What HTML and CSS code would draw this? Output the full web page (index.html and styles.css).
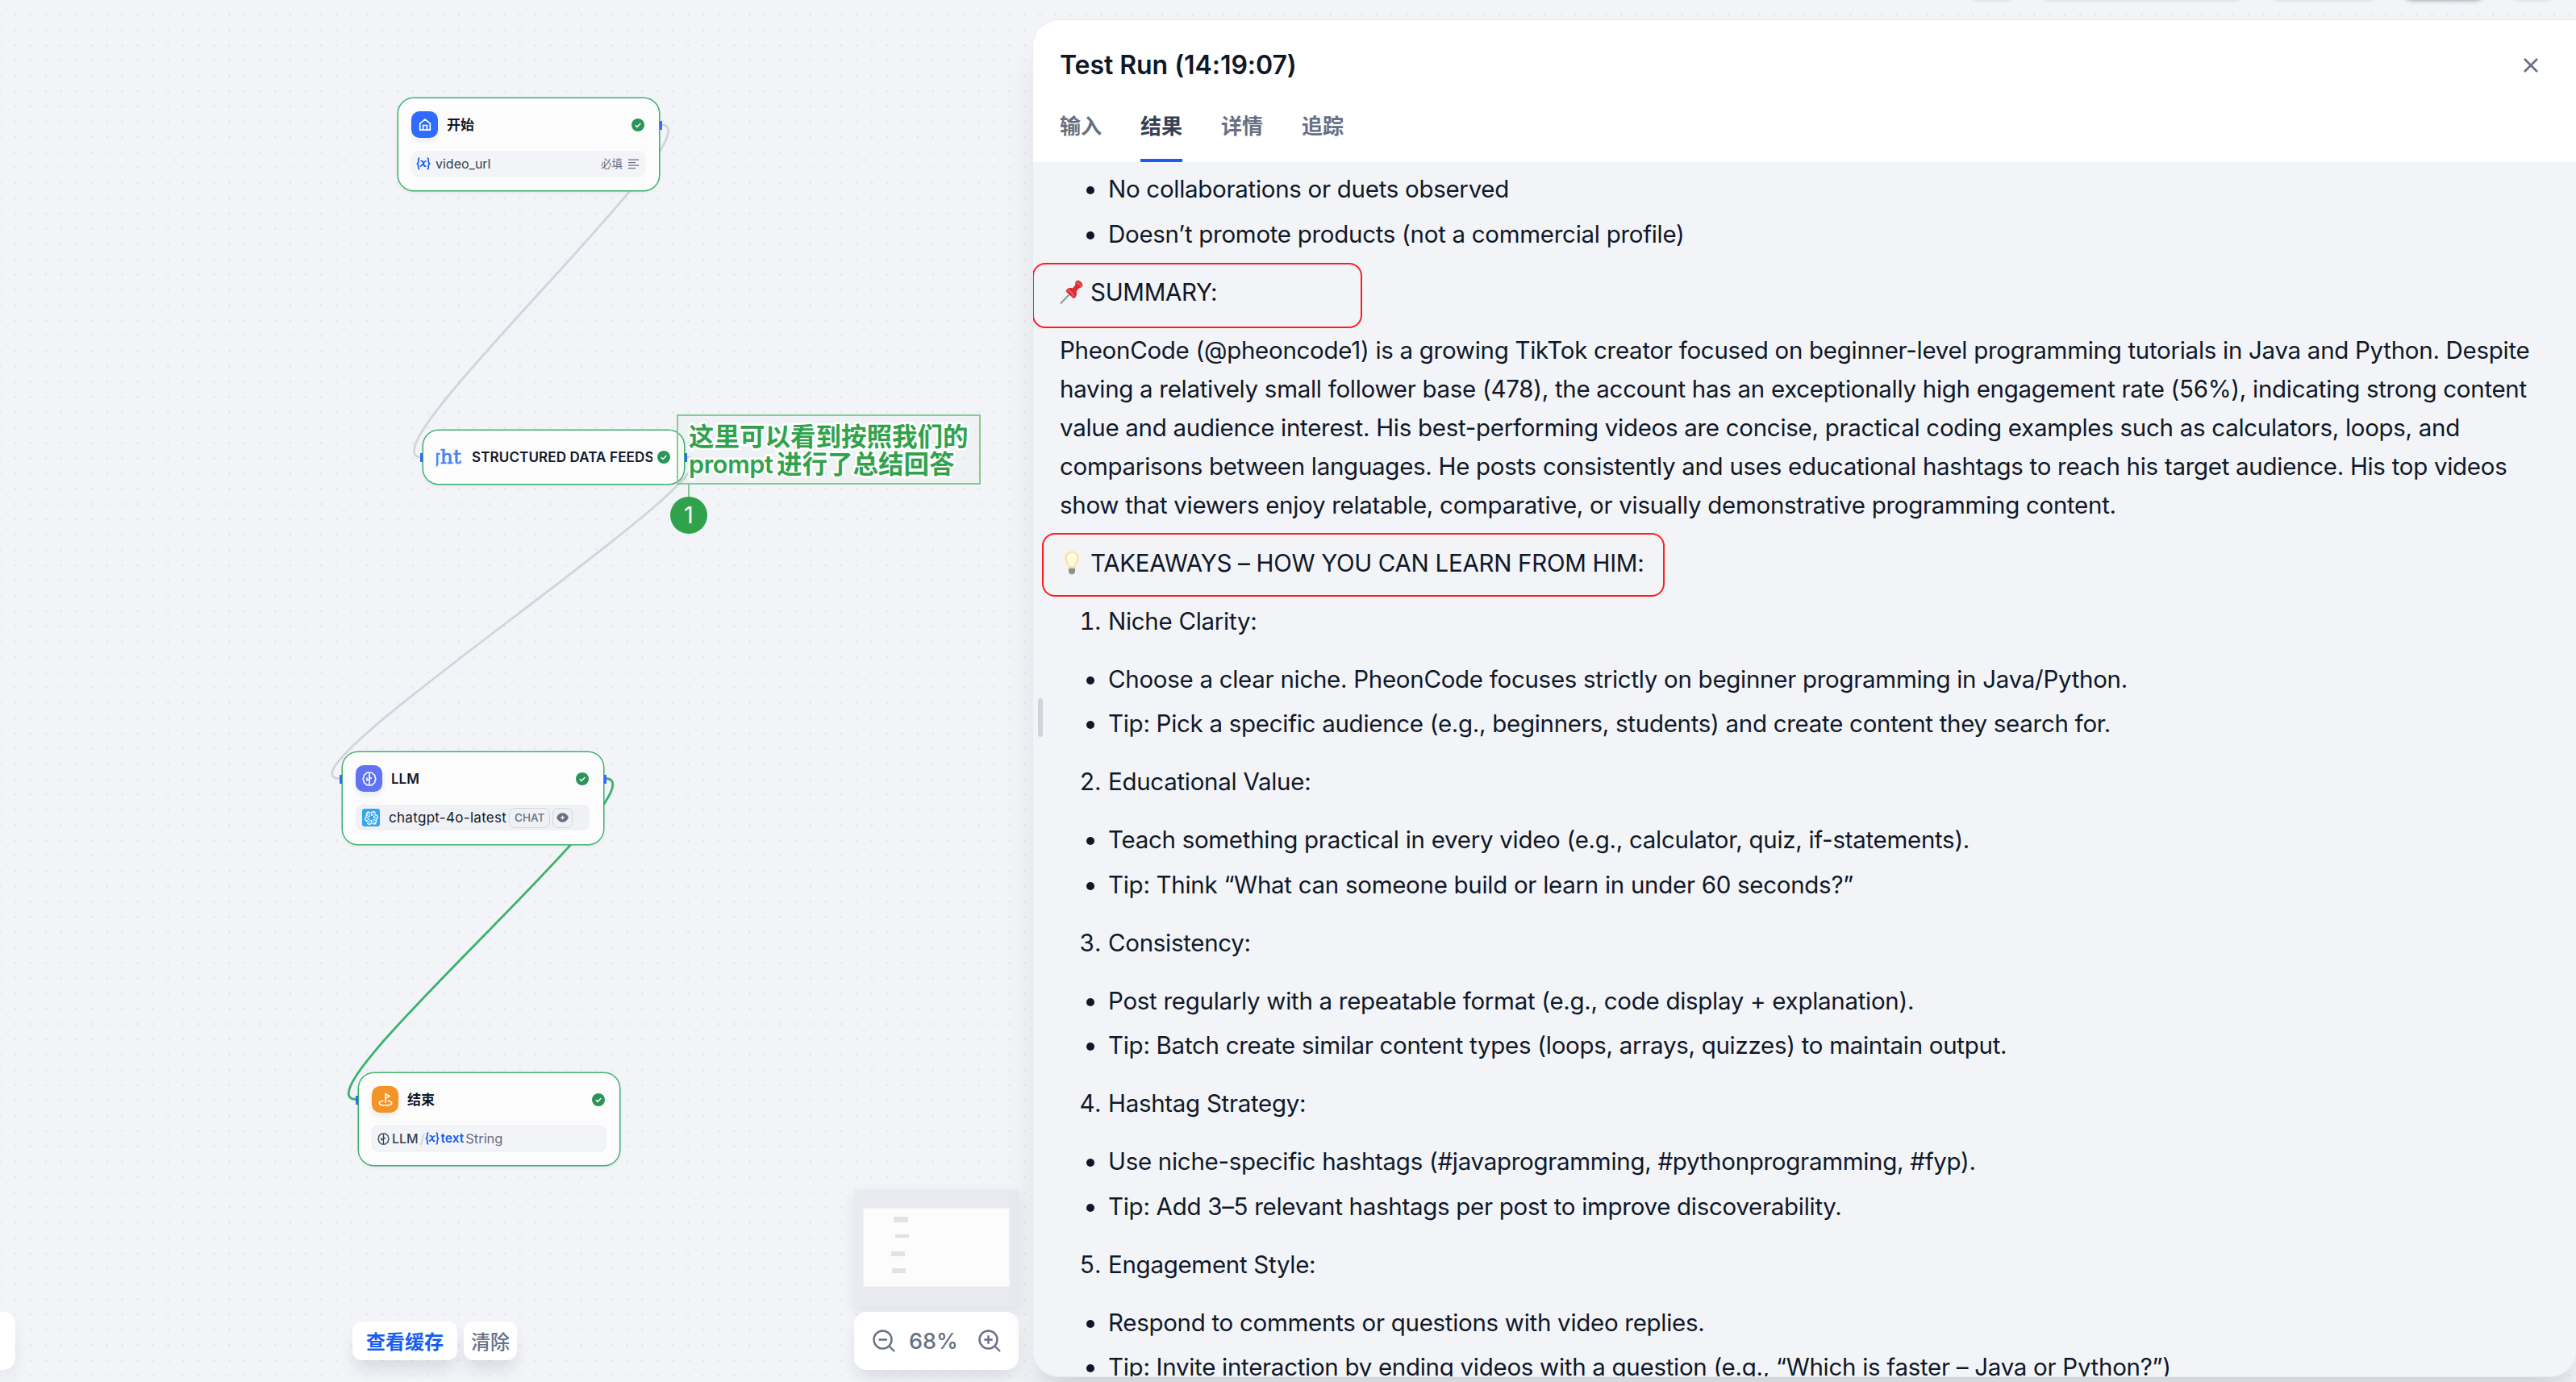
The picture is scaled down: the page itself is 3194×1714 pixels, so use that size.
FILE: index.html
```html
<!DOCTYPE html>
<html lang="zh-CN">
<head>
    <meta charset="UTF-8">
    <meta name="viewport" content="width=device-width, initial-scale=1.0">
    <title>Test Run</title>
    <link rel="stylesheet" href="styles.css">
</head>
<body>
    <!-- shared icons -->
    <svg class="sprite" width="0" height="0">
        <symbol id="check" viewBox="0 0 16 16">
            <circle cx="8" cy="8" r="8" fill="#2d9458"/>
            <path d="M4.8 8.2l2.2 2.2 4.3-4.4" fill="none" stroke="#fff" stroke-width="1.5"/>
        </symbol>
        <symbol id="var" viewBox="0 0 18 16">
            <path d="M4.300 1.200C2.300 1.200 2.800 3 2.800 5S2.400 7.600.8 8c1.600.4 2 1 2 3s-.5 3.800 1.500 3.800M13.700 1.200C15.700 1.200 15.200 3 15.200 5s.4 2.600 2 3c-1.600.4-2 1-2 3s.5 3.800-1.500 3.800M5.600 5c1.600-.7 2.600-.2 3 1.200l1 3.600c.4 1.400 1.300 1.800 2.800 1M12.700 4.800c-1.500-.3-2.300.5-3.500 2.200L7.800 9.300c-1 1.400-1.700 2-3 1.700" fill="none" stroke="#155eef" stroke-width="1.700"/>
        </symbol>
        <symbol id="brain" viewBox="0 0 16 16">
            <path d="M8 1.200C6.400.5 4.600 1 4 2.600 2.300 3 1.500 4.400 1.900 6 .8 7.300.8 8.800 1.900 10c-.4 1.600.5 3 2.100 3.400.7 1.600 2.400 2 4 1.300 1.600.7 3.300.3 4-1.300 1.600-.4 2.500-1.800 2.100-3.400 1.100-1.200 1.100-2.700 0-4 .4-1.600-.4-3-2.100-3.400C11.400 1 9.600.5 8 1.200zM8 1.200v13.500M8 5c0 1.500 1 2.200 2.600 2.200M8 10.600C8 9 7 8.400 5.300 8.400M5.300 6.400v3.800" fill="none" stroke="currentColor" stroke-width="1.400"/>
        </symbol>
    </svg>

    <div class="app">
        <svg class="dots">
            <defs>
                <pattern id="grid" x="-1.430" y="17" width="18.966" height="18.966" patternUnits="userSpaceOnUse">
                    <circle cx="1.300" cy="1.300" r="1.300" fill="#e1e4ea"/>
                </pattern>
            </defs>
            <rect width="100%" height="100%" fill="url(#grid)"/>
        </svg>

        <div class="toolbar">
            <span class="tool tool-sm"></span>
            <span class="tool tool-lg"></span>
            <span class="tool tool-md"></span>
            <span class="tool tool-dark"></span>
            <span class="tool tool-sm"></span>
        </div>

        <main class="workspace">
            <svg class="edges" width="1281" height="1714" fill="none">
                <path class="edge" d="M819 154.500C900 154.500 442 567 523 567"/>
                <path class="edge" d="M850 567C947 567 325 965.500 422 965.500"/>
                <path class="edge edge-done" d="M750 965.500C833 965.500 359 1363.500 442 1363.500"/>
            </svg>

            <div class="node node-start has-out">
                <div class="node-head">
                    <span class="node-icon blue">
                        <svg width="18" height="18" viewBox="0 0 18 18" fill="none" stroke="#fff" stroke-width="1.700"><path d="M2.700 7.200L9 2.200l6.300 5v8H2.700zM6.600 15V9.500h4.800V15"/></svg>
                    </span>
                    <span class="node-title">开始</span>
                    <svg class="check"><use href="#check"/></svg>
                </div>
                <div class="field">
                    <svg class="var"><use href="#var"/></svg>
                    <span class="field-name">video_url</span>
                    <span class="field-note">必填</span>
                    <svg class="lines" width="14" height="13" fill="none" stroke="#676f83" stroke-width="1.300"><path d="M0 1.200h13M0 4.700h9M0 8.200h13M0 11.700h9"/></svg>
                </div>
            </div>

            <div class="node node-feed has-in has-out">
                <div class="node-head">
                    <span class="logo-clip"><span>ght</span></span>
                    <span class="node-title">STRUCTURED DATA FEEDS</span>
                    <svg class="check"><use href="#check"/></svg>
                </div>
            </div>

            <div class="node node-llm has-in has-out">
                <div class="node-head">
                    <span class="node-icon indigo"><svg width="18" height="18"><use href="#brain"/></svg></span>
                    <span class="node-title">LLM</span>
                    <svg class="check"><use href="#check"/></svg>
                </div>
                <div class="field model">
                    <span class="model-icon">
                        <svg width="17" height="17" viewBox="0 0 24 24" fill="none" stroke="#fff" stroke-width="1.400">
                            <g id="petal"><path d="M12 8.200V4.600a4.200 4.200 0 0 1 7.600-2.200M8.700 10.100V5.500a4.500 4.500 0 0 1 6.800-3.600l3.800 2.200"/></g>
                            <use href="#petal" transform="rotate(60 12 12)"/>
                            <use href="#petal" transform="rotate(120 12 12)"/>
                            <use href="#petal" transform="rotate(180 12 12)"/>
                            <use href="#petal" transform="rotate(240 12 12)"/>
                            <use href="#petal" transform="rotate(300 12 12)"/>
                        </svg>
                    </span>
                    <span class="model-name">chatgpt-4o-latest</span>
                    <span class="badge">CHAT</span>
                    <span class="badge badge-eye">
                        <svg width="15" height="12" viewBox="0 0 15 12"><path d="M0 6C2 2 4.500.3 7.500.3S13 2 15 6c-2 4-4.500 5.700-7.500 5.700S2 10 0 6z" fill="#676f83"/><path d="M7.500 3l.9 2.100 2.100.9-2.100.9-.9 2.100-.9-2.100L4.500 6l2.100-.9z" fill="#fff"/></svg>
                    </span>
                </div>
            </div>

            <div class="node node-end has-in">
                <div class="node-head">
                    <span class="node-icon orange">
                        <svg width="18" height="18" viewBox="0 0 18 18" fill="none" stroke="#fff" stroke-width="1.600"><path d="M9 13V1.800l5 2.800-5 2.800M6.500 10.200C3.500 10.600 1.300 11.600 1.300 13c0 1.800 3.300 3 7.700 3s7.700-1.200 7.700-3c0-1.400-2.200-2.400-5.200-2.800"/></svg>
                    </span>
                    <span class="node-title">结束</span>
                    <svg class="check"><use href="#check"/></svg>
                </div>
                <div class="field output">
                    <svg class="brain" width="15" height="15"><use href="#brain"/></svg>
                    <span class="out-node">LLM</span>
                    <span class="slash">/</span>
                    <svg class="var"><use href="#var"/></svg>
                    <span class="out-var">text</span>
                    <span class="out-type">String</span>
                </div>
            </div>

            <div class="note">
                <div class="note-box">这里可以看到按照我们的<br><span class="note-latin">prompt</span>进行了总结回答</div>
                <div class="note-stem"></div>
                <div class="note-pin">1</div>
            </div>

            <div class="bottom-bar">
                <div class="dock"></div>
                <div class="cache">
                    <button class="btn btn-primary">查看缓存</button>
                    <button class="btn btn-clear">清除</button>
                </div>
                <div class="map-stack">
                    <div class="minimap">
                        <svg width="180" height="96" fill="#e2e2e2">
                            <path d="M37 10h18v7H37zM39 32h17v4H39zM34 53h17v6H34zM35 74h17v6H35z"/>
                        </svg>
                    </div>
                    <div class="zoom">
                        <svg width="28" height="28" viewBox="0 0 28 28" fill="none" stroke="#676f83" stroke-width="2.400"><circle cx="12.500" cy="12.500" r="11"/><path d="M20.500 20.500l6.500 6.500M7.500 12.500h10.500"/></svg>
                        <span class="zoom-value">68%</span>
                        <svg width="28" height="28" viewBox="0 0 28 28" fill="none" stroke="#676f83" stroke-width="2.400"><circle cx="12.500" cy="12.500" r="11"/><path d="M20.500 20.500l6.500 6.500M7.300 12.500h10.400M12.500 7.300v10.400"/></svg>
                    </div>
                </div>
            </div>
        </main>

        <section class="panel">
            <header class="panel-head">
                <div class="panel-title">
                    <h1>Test Run (14:19:07)</h1>
                    <svg class="close" width="18" height="18" stroke="#676f83" stroke-width="2.600"><path d="M1 1l16 16M17 1L1 17"/></svg>
                </div>
                <nav class="tabs">
                    <a class="tab">输入</a>
                    <a class="tab active">结果</a>
                    <a class="tab">详情</a>
                    <a class="tab">追踪</a>
                </nav>
            </header>
            <div class="handle"></div>
            <div class="result">
                <ul>
                    <li>No collaborations or duets observed</li>
                    <li>Doesn’t promote products (not a commercial profile)</li>
                </ul>
                <p class="boxed box-summary">
                    <svg class="emoji" width="30" height="30" viewBox="0 0 30 30"><path d="M13 17L1 29.500" stroke="#8d979f" stroke-width="2"/><path d="M19.500 2.500c2-2.500 4-2.200 6.500 0s3.200 4.800.8 6.700c-1 .7-2 .6-2.800 1.300l-3.300 3.700c.8 3.300.2 6.200-2 8.300-1 .9-2 .5-3-.5l-7-6.600c-1-1-1.300-2-.4-3 2-2.200 4.600-2.800 7.700-1.900l3.200-4c.5-1-.2-2.900.3-4z" fill="#d92f35"/><path d="M20.500 3c2 .3 5.200 3.300 5.600 5.500M9.500 13c3 .2 6.800 3.800 8 7.500" fill="none" stroke="#f2696c" stroke-width="1.500"/></svg>
                    <span>SUMMARY:</span>
                </p>
                <p class="summary">PheonCode (@pheoncode1) is a growing TikTok creator focused on beginner-level programming tutorials in Java and Python. Despite<br>having a relatively small follower base (478), the account has an exceptionally high engagement rate (56%), indicating strong content<br>value and audience interest. His best-performing videos are concise, practical coding examples such as calculators, loops, and<br>comparisons between languages. He posts consistently and uses educational hashtags to reach his target audience. His top videos<br>show that viewers enjoy relatable, comparative, or visually demonstrative programming content.</p>
                <p class="boxed box-takeaways">
                    <svg class="emoji" width="30" height="30" viewBox="0 0 30 30"><path d="M15 .5c5.500 0 9 3.700 9 8.700 0 4.500-3.300 6.500-4.500 12h-9C9.300 15.700 6 13.700 6 9.200 6 4.200 9.500.5 15 .5z" fill="#fae7a6"/><path d="M15 3c3.700 0 6 2.700 6 6 0 4-2.500 5.500-3.500 10h-5C11.500 14.500 9 13 9 9c0-3.300 2.300-6 6-6z" fill="#fffbe6"/><path d="M11 21.500h8v5c0 1.500-1.500 3-4 3s-4-1.500-4-3z" fill="#a3a09c"/><path d="M11 24h8M11.500 26.500h7" stroke="#77736f"/></svg>
                    <span>TAKEAWAYS – HOW YOU CAN LEARN FROM HIM:</span>
                </p>
                <ol><li>Niche Clarity:</li></ol>
                <ul>
                    <li>Choose a clear niche. PheonCode focuses strictly on beginner programming in Java/Python.</li>
                    <li>Tip: Pick a specific audience (e.g., beginners, students) and create content they search for.</li>
                </ul>
                <ol><li>Educational Value:</li></ol>
                <ul>
                    <li>Teach something practical in every video (e.g., calculator, quiz, if-statements).</li>
                    <li>Tip: Think “What can someone build or learn in under 60 seconds?”</li>
                </ul>
                <ol><li>Consistency:</li></ol>
                <ul>
                    <li>Post regularly with a repeatable format (e.g., code display + explanation).</li>
                    <li>Tip: Batch create similar content types (loops, arrays, quizzes) to maintain output.</li>
                </ul>
                <ol><li>Hashtag Strategy:</li></ol>
                <ul>
                    <li>Use niche-specific hashtags (#javaprogramming, #pythonprogramming, #fyp).</li>
                    <li>Tip: Add 3–5 relevant hashtags per post to improve discoverability.</li>
                </ul>
                <ol><li>Engagement Style:</li></ol>
                <ul>
                    <li>Respond to comments or questions with video replies.</li>
                    <li>Tip: Invite interaction by ending videos with a question (e.g., “Which is faster – Java or Python?”)</li>
                </ul>
            </div>
        </section>
    </div>
</body>
</html>
```
FILE: styles.css
```css
*,
*::before,
*::after {
    margin: 0;
    padding: 0;
    box-sizing: border-box;
}
body {
    font-family: Inter, "Noto Sans CJK SC", sans-serif;
    background-color: #f2f4f7;
    color: #101828;
    overflow: hidden;
}
svg {
    display: block;
    flex-shrink: 0;
}
.sprite {
    position: absolute;
}
.app {
    position: relative;
    display: flex;
    width: 3194px;
    height: 1714px;
    background: #f2f4f8;
    overflow: hidden;
}
.dots {
    position: absolute;
    inset: 0;
    width: 100%;
    height: 100%;
}

/* toolbar scrolled out above the top edge, only its shadows show */
.toolbar {
    position: absolute;
    top: -40px;
    right: 24px;
    display: flex;
    gap: 28px;
}
.tool {
    height: 39px;
    border-radius: 14px;
    box-shadow: 0 2px 4px rgba(16,24,40,0.1);
}
.tool-sm {
    width: 60px;
}
.tool-md {
    width: 138px;
}
.tool-lg {
    width: 256px;
}
.tool-dark {
    width: 104px;
    box-shadow: 0 2px 5px rgba(16,24,40,0.35);
}

/* canvas */
.workspace {
    position: relative;
    display: flex;
    flex-direction: column;
    justify-content: flex-end;
    width: 1281px;
    height: 100%;
    flex-shrink: 0;
}
.edges {
    position: absolute;
    top: 0;
    left: 0;
}
.edge {
    stroke: #d0d5dc;
    stroke-width: 2.8;
}
.edge-done {
    stroke: #3cb16c;
}
.node {
    position: absolute;
    width: 325px;
    height: 116px;
    padding: 16px;
    border: 1px solid #3cb16c;
    border-radius: 20px;
    background: #fcfcfd;
    box-shadow: 0 0 0 0.5px #3cb16c, 0 2px 4px rgba(16,24,40,0.06);
}
.node-start {
    left: 493px;
    top: 121px;
}
.node-feed {
    left: 524px;
    top: 533px;
    height: 68px;
}
.node-llm {
    left: 424px;
    top: 932px;
}
.node-end {
    left: 444px;
    top: 1330px;
}
.has-in::before,
.has-out::after {
    content: "";
    position: absolute;
    top: 28px;
    width: 3px;
    height: 11px;
    background: #2f6bff;
}
.has-in::before {
    left: -4px;
}
.has-out::after {
    right: -4px;
}
.node-head {
    display: flex;
    align-items: center;
    height: 33px;
}
.node-icon {
    display: flex;
    align-items: center;
    justify-content: center;
    width: 33px;
    height: 33px;
    margin-right: 11px;
    border-radius: 10px;
    color: #fff;
    box-shadow: 0 4px 6px rgba(16,24,40,0.08);
}
.blue {
    background: #2f6bff;
}
.indigo {
    background: #6172f3;
}
.orange {
    background: #f39428;
}
.node-title {
    flex: 1;
    overflow: hidden;
    white-space: nowrap;
    font-size: 17px;
    line-height: 24px;
    font-weight: 600;
}
.check {
    width: 16px;
    height: 16px;
    margin-right: 2px;
}
.logo-clip {
    display: flex;
    justify-content: flex-end;
    width: 31px;
    margin-right: 13px;
    overflow: hidden;
    font-family: "DejaVu Serif", serif;
    font-size: 25px;
    line-height: 32px;
    color: #4a80f5;
    -webkit-text-stroke: 0.7px #4a80f5;
}
.node-feed .node-title {
    letter-spacing: 0.13px;
}
.node-feed .check {
    margin-left: 6px;
    margin-right: 1px;
}
.field {
    display: flex;
    align-items: center;
    width: 290px;
    height: 32px;
    margin-top: 16px;
    padding: 0 7px 0 6px;
    border-radius: 8px;
    background: #f2f4f8;
    font-size: 16px;
    line-height: 22px;
    color: #354052;
}
.var {
    width: 18px;
    height: 16px;
}
.field-name {
    flex: 1;
    margin-left: 6px;
    font-size: 16px;
}
.field-note {
    margin-right: 7px;
    font-size: 13.5px;
    color: #676f83;
}
.model {
    padding-left: 8px;
    background: #f0f1f5;
}
.model-icon {
    display: flex;
    align-items: center;
    justify-content: center;
    width: 22px;
    height: 22px;
    border-radius: 3px;
    background: #32a5ee;
}
.model-name {
    margin: 0 3px 0 11px;
    color: #101828;
    white-space: nowrap;
    font-size: 17px;
    letter-spacing: 0.3px;
}
.badge {
    display: flex;
    align-items: center;
    justify-content: center;
    width: 51px;
    height: 25px;
    border: 1px solid #d3d7df;
    border-radius: 7px;
    font-size: 13.5px;
    font-weight: 500;
    color: #676f83;
}
.badge-eye {
    width: 25px;
    margin-left: 3px;
}
.output {
    border: 1px solid #e6e9ee;
}
.brain {
    margin-right: 3px;
}
.out-node {
    font-weight: 500;
}
.slash {
    margin: 0 1px 0 2px;
    color: #c8cdd6;
}
.out-var {
    margin: 0 2px 0 1px;
    font-weight: 600;
    font-size: 15.5px;
    color: #155eef;
}
.out-type {
    font-size: 16.5px;
    color: #676f83;
}

/* annotation */
.note {
    position: absolute;
    left: 839px;
    top: 514px;
    width: 377px;
}
.note-box {
    height: 87px;
    padding: 9px 0 0 13px;
    border: 2px solid #86cb97;
    background: rgba(47,159,74,0.02);
    font-size: 31.5px;
    line-height: 34px;
    font-weight: 700;
    white-space: nowrap;
    color: #31a24c;
    paint-order: stroke fill;
    -webkit-text-stroke: 5px #fff;
}
.note-latin {
    display: inline-block;
    width: 109px;
    font-size: 30.5px;
    font-weight: 600;
    letter-spacing: -0.3px;
}
.note-stem {
    width: 2px;
    height: 16px;
    margin-left: 14px;
    background: #86cb97;
}
.note-pin {
    width: 46px;
    height: 46px;
    margin-left: -8px;
    margin-top: -1px;
    border-radius: 50%;
    background: #31a24c;
    color: #fff;
    font-size: 29px;
    line-height: 46px;
    text-align: center;
}

/* bottom controls */
.bottom-bar {
    position: relative;
    display: flex;
    align-items: flex-end;
    justify-content: space-between;
    padding: 0 18px 15px 0;
}
.dock {
    width: 19px;
    height: 72px;
    border-radius: 0 15px 15px 0;
    background: #fff;
    box-shadow: 0 12px 20px -4px rgba(16,24,40,0.12);
}
.cache {
    display: flex;
    gap: 8px;
    margin-bottom: 12px;
}
.btn {
    height: 48px;
    padding-bottom: 2px;
    border: none;
    border-radius: 12px;
    background: #fff;
    font-family: inherit;
    font-size: 24px;
    font-weight: 500;
    box-shadow: 0 14px 20px -4px rgba(16,24,40,0.12);
}
.btn-primary {
    width: 130px;
    font-weight: 700;
    color: #155eef;
}
.btn-clear {
    width: 66px;
    color: #676f83;
}
.map-stack {
    display: flex;
    flex-direction: column;
    gap: 7px;
}
.minimap {
    width: 204px;
    height: 145px;
    padding: 24px 12px;
    background: #e9ebf0;
    box-shadow: 0 8px 16px rgba(16,24,40,0.08);
}
.minimap svg {
    background: #fcfcfd;
    box-shadow: 0 0 0 1px #f2f3f6;
}
.zoom {
    display: flex;
    align-items: center;
    justify-content: space-between;
    height: 72px;
    padding: 0 22px 0 23px;
    border-radius: 15px;
    background: #fff;
    box-shadow: 0 12px 20px -4px rgba(16,24,40,0.12);
}
.zoom-value {
    margin-right: 8px;
    font-size: 27px;
    font-weight: 500;
    color: #676f83;
}

/* run panel */
.panel {
    position: relative;
    flex: 1;
    display: flex;
    flex-direction: column;
    height: 1682px;
    margin-top: 25px;
    border-radius: 32px 0 32px 32px;
    background: #f2f4f8;
    box-shadow: 0 0 0 1px #e9ebf0, 0 40px 48px -8px rgba(16,24,40,0.11), 0 16px 16px -8px rgba(16,24,40,0.04);
}
.panel-head {
    display: flex;
    flex-direction: column;
    justify-content: space-between;
    height: 176px;
    padding: 36px 46px 0 33px;
    border-radius: 32px 0 0 0;
    background: #fff;
}
.panel-title {
    display: flex;
    align-items: center;
    justify-content: space-between;
    height: 40px;
}
.panel-title h1 {
    font-size: 32px;
    line-height: 40px;
    font-weight: 600;
    letter-spacing: -0.05px;
    white-space: nowrap;
}
.close {
    margin-right: 1px;
}
.tabs {
    display: flex;
    gap: 48px;
}
.tab {
    height: 64px;
    border-bottom: 4px solid transparent;
    font-size: 26px;
    line-height: 40px;
    font-weight: 600;
    color: #676f83;
}
.tab.active {
    border-color: #155eef;
    color: #354052;
}
.handle {
    position: absolute;
    left: 6px;
    top: 841px;
    width: 6px;
    height: 48px;
    border-radius: 3px;
    background: #d0d5dc;
}
.result {
    flex: 1;
    padding: 9px 0 0 33px;
    overflow: hidden;
    border-radius: 0 0 32px 32px;
    font-size: 29.5px;
    line-height: 48px;
    letter-spacing: -0.29px;
    white-space: nowrap;
    counter-reset: step;
}
.result ul,
.result ol {
    padding-left: 60px;
    margin-bottom: 24px;
    list-style: none;
}
.result li {
    position: relative;
}
.result li + li {
    margin-top: 7.5px;
}
.result ul li::before {
    content: "";
    position: absolute;
    left: -27px;
    top: 21px;
    width: 10px;
    height: 10px;
    border-radius: 50%;
    background: #101828;
}
.result ol li::before {
    counter-increment: step;
    content: counter(step) ".";
    position: absolute;
    right: 100%;
    margin-right: 9px;
    font-variant-numeric: tabular-nums;
}
.result p {
    margin-bottom: 24px;
}
.boxed {
    position: relative;
    display: flex;
    align-items: center;
    gap: 8px;
}
/* red marker frame around a heading line */
.boxed::after {
    content: "";
    position: absolute;
    border: 2px solid #ff1c1c;
    border-radius: 16px;
}
.box-summary::after {
    left: -34px;
    top: -12px;
    width: 409px;
    height: 81px;
}
.box-takeaways::after {
    left: -22px;
    top: -12.5px;
    width: 772px;
    height: 79px;
}
```
